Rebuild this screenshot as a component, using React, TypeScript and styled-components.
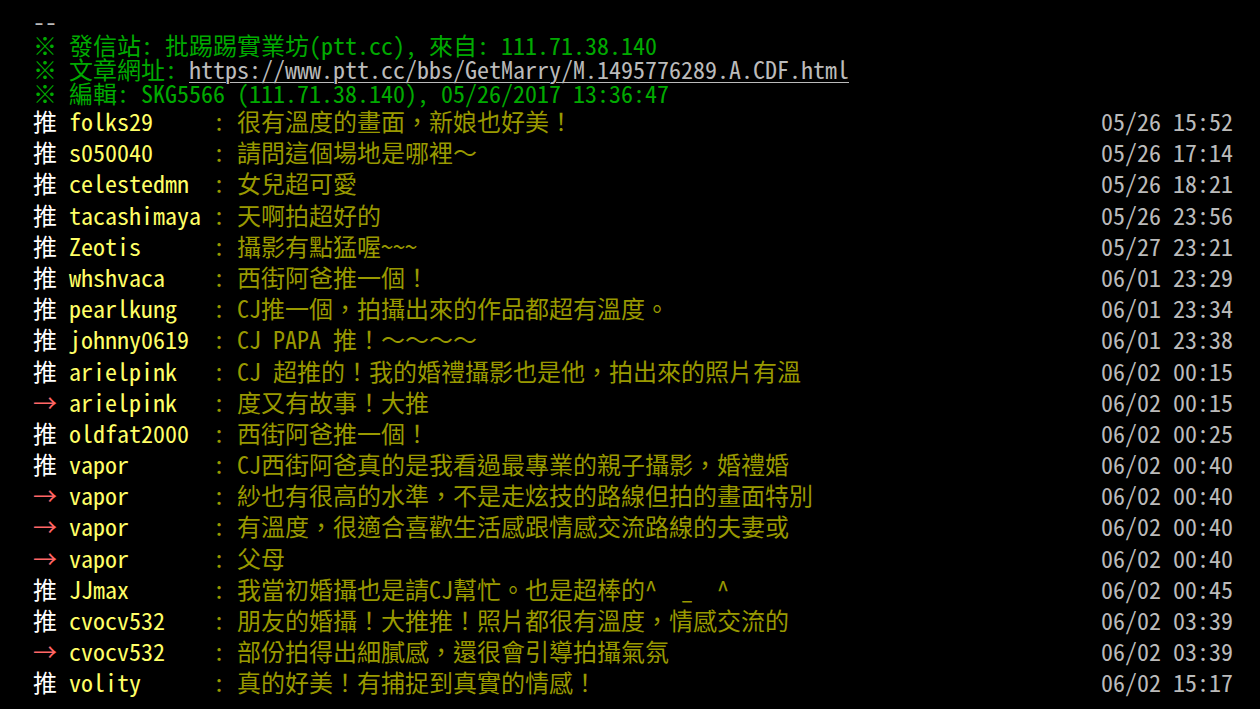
import React from "react";
import styled, { createGlobalStyle } from "styled-components";

const GlobalStyle = createGlobalStyle`
  html, body {
    margin: 0;
    padding: 0;
    background: #000;
  }
  body {
    font-family: "Noto Sans Mono CJK TC", "Noto Sans CJK TC", monospace;
  }
`;

const Screen = styled.div`
  width: 1200px;
  padding: 9px 0 0 33px;
  font-family: "Noto Sans Mono CJK TC", "Noto Sans CJK TC", monospace;
  font-size: 24px;
  color: #bbb;
  white-space: pre;
`;

const Line = styled.div<{ $color?: string }>`
  height: 24px;
  line-height: 24px;
  color: ${(p) => p.$color ?? "#bbb"};
`;

const Url = styled.a`
  color: #bbb;
  text-decoration: underline;
  text-decoration-thickness: 1px;
  text-underline-offset: 3px;
`;

const PushRow = styled.div`
  display: flex;
  align-items: baseline;
  height: 31.2px;
  line-height: 31.2px;
`;

const PushTag = styled.span<{ $arrow?: boolean }>`
  color: ${(p) => (p.$arrow ? "#f66" : "#fff")};
`;

const UserId = styled.span`
  display: inline-block;
  min-width: 144px;
  color: #ff6;
`;

const Content = styled.span`
  color: #990;
`;

const DateTime = styled.span`
  margin-left: auto;
  color: #bbb;
`;

type Push = { tag: "推" | "→"; user: string; text: string; time: string };

const pushes: Push[] = [
  { tag: "推", user: "folks29", text: "很有溫度的畫面，新娘也好美！", time: "05/26 15:52" },
  { tag: "推", user: "s050040", text: "請問這個場地是哪裡～", time: "05/26 17:14" },
  { tag: "推", user: "celestedmn", text: "女兒超可愛", time: "05/26 18:21" },
  { tag: "推", user: "tacashimaya", text: "天啊拍超好的", time: "05/26 23:56" },
  { tag: "推", user: "Zeotis", text: "攝影有點猛喔~~~", time: "05/27 23:21" },
  { tag: "推", user: "whshvaca", text: "西街阿爸推一個！", time: "06/01 23:29" },
  { tag: "推", user: "pearlkung", text: "CJ推一個，拍攝出來的作品都超有溫度。", time: "06/01 23:34" },
  { tag: "推", user: "johnny0619", text: "CJ PAPA 推！～～～～", time: "06/01 23:38" },
  { tag: "推", user: "arielpink", text: "CJ 超推的！我的婚禮攝影也是他，拍出來的照片有溫", time: "06/02 00:15" },
  { tag: "→", user: "arielpink", text: "度又有故事！大推", time: "06/02 00:15" },
  { tag: "推", user: "oldfat2000", text: "西街阿爸推一個！", time: "06/02 00:25" },
  { tag: "推", user: "vapor", text: "CJ西街阿爸真的是我看過最專業的親子攝影，婚禮婚", time: "06/02 00:40" },
  { tag: "→", user: "vapor", text: "紗也有很高的水準，不是走炫技的路線但拍的畫面特別", time: "06/02 00:40" },
  { tag: "→", user: "vapor", text: "有溫度，很適合喜歡生活感跟情感交流路線的夫妻或", time: "06/02 00:40" },
  { tag: "→", user: "vapor", text: "父母", time: "06/02 00:40" },
  { tag: "推", user: "JJmax", text: "我當初婚攝也是請CJ幫忙。也是超棒的^  _  ^", time: "06/02 00:45" },
  { tag: "推", user: "cvocv532", text: "朋友的婚攝！大推推！照片都很有溫度，情感交流的", time: "06/02 03:39" },
  { tag: "→", user: "cvocv532", text: "部份拍得出細膩感，還很會引導拍攝氣氛", time: "06/02 03:39" },
  { tag: "推", user: "volity", text: "真的好美！有捕捉到真實的情感！", time: "06/02 15:17" },
];

export default function App() {
  return (
    <>
      <GlobalStyle />
      <Screen>
        <Line>--</Line>
        <Line $color="#0a0">※ 發信站: 批踢踢實業坊(ptt.cc), 來自: 111.71.38.140</Line>
        <Line $color="#0a0">
          ※ 文章網址: <Url href="#">https://www.ptt.cc/bbs/GetMarry/M.1495776289.A.CDF.html</Url>
        </Line>
        <Line $color="#0a0">※ 編輯: SKG5566 (111.71.38.140), 05/26/2017 13:36:47</Line>
        {pushes.map((p, i) => (
          <PushRow key={i}>
            <PushTag $arrow={p.tag === "→"}>{p.tag} </PushTag>
            <UserId>{p.user}</UserId>
            <Content>: {p.text}</Content>
            <DateTime> {p.time}</DateTime>
          </PushRow>
        ))}
      </Screen>
    </>
  );
}
